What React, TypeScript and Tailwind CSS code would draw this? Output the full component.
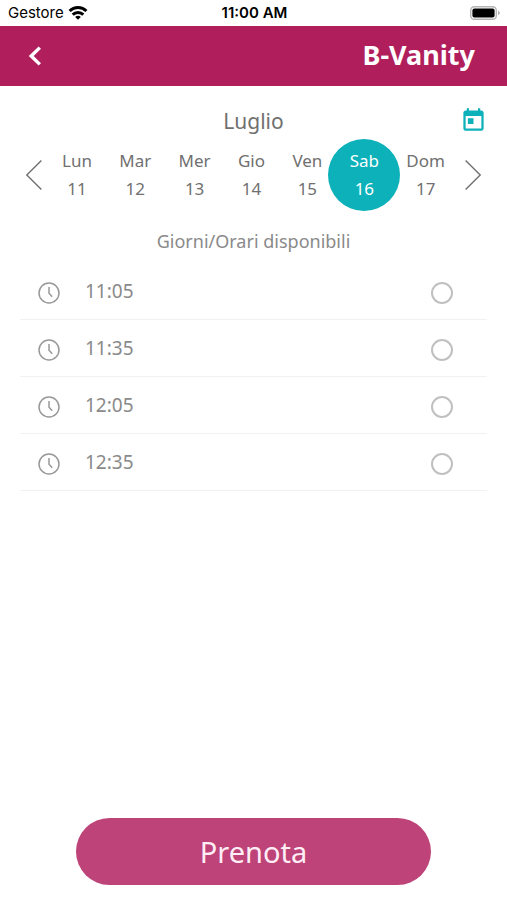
import { useState } from 'react';
import { MdToday } from 'react-icons/md';

const days = [
  { name: 'Lun', date: 11 },
  { name: 'Mar', date: 12 },
  { name: 'Mer', date: 13 },
  { name: 'Gio', date: 14 },
  { name: 'Ven', date: 15 },
  { name: 'Sab', date: 16 },
  { name: 'Dom', date: 17 },
];

const slots = ['11:05', '11:35', '12:05', '12:35'];

function WifiIcon() {
  return (
    <svg className="w-5 h-4" viewBox="0 0 20 16" fill="none" stroke="currentColor" strokeWidth="3" aria-hidden="true">
      <path d="M1.6 6a12 12 0 0 1 16.8 0" />
      <path d="M4.7 9.6a7.5 7.5 0 0 1 10.6 0" />
      <path d="M10 14.8l-2.8-2.9a3.9 3.9 0 0 1 5.6 0z" fill="currentColor" stroke="none" />
    </svg>
  );
}

function BatteryIcon() {
  return (
    <svg className="w-8 h-4" viewBox="0 0 32 16" aria-hidden="true">
      <rect x="1.7" y="1.7" width="25.6" height="12.6" rx="3.6" fill="#fff" stroke="#b4b4b4" strokeWidth="1.4" />
      <rect x="3.4" y="3.4" width="22.2" height="9.2" rx="2" fill="#000" />
      <path d="M29 5.8c1.2.4 1.8 1.2 1.8 2.2s-.6 1.8-1.8 2.2z" fill="#b4b4b4" />
    </svg>
  );
}

function ClockIcon() {
  return (
    <svg className="w-6 h-6" viewBox="0 0 24 24" fill="none" stroke="#999" strokeWidth="1.5" aria-hidden="true">
      <circle cx="12" cy="12" r="10" />
      <path d="M12 6v6.2l3.2 3.6" />
    </svg>
  );
}

export default function App() {
  const [day, setDay] = useState(16);
  const [slot, setSlot] = useState('');

  return (
    <div className="flex flex-col min-h-screen bg-white text-[#707070] font-['Noto_Sans',sans-serif]">
      {/* Status bar */}
      <div className="grid grid-cols-3 items-center h-[26px] pl-2 pr-1.5 text-black font-['Inter',sans-serif] text-[15px]">
        <div className="flex items-center gap-1">
          <span>Gestore</span>
          <WifiIcon />
        </div>
        <span className="text-center font-semibold">11:00 AM</span>
        <div className="flex justify-end">
          <BatteryIcon />
        </div>
      </div>

      {/* Header */}
      <header className="flex items-center justify-between h-[60px] pl-6 pr-8 bg-[#b01e5b] text-white">
        <button type="button" aria-label="Indietro">
          <svg className="w-6 h-6" viewBox="0 0 24 24" fill="none" stroke="currentColor" strokeWidth="3.4" aria-hidden="true">
            <path d="M15.8 3.6L7.2 12l8.6 8.4" />
          </svg>
        </button>
        <h1 className="pb-0.5 text-[27px] leading-8 font-bold">B-Vanity</h1>
      </header>

      <main className="flex flex-col flex-1 pt-[17px] pb-[15px]">
        {/* Month */}
        <div className="grid grid-cols-[1fr_auto_1fr] items-center h-9 px-5">
          <h2 className="col-start-2 text-[21px] leading-8">Luglio</h2>
          <button type="button" aria-label="Calendario" className="justify-self-end pb-0.5 text-[#0cb1b9]">
            <MdToday size={27} />
          </button>
        </div>

        {/* Week */}
        <div className="flex items-center justify-between h-[72px] px-6">
          <button type="button" aria-label="Settimana precedente">
            <svg className="w-5 h-8" viewBox="0 0 20 32" fill="none" stroke="currentColor" strokeWidth="1.4" aria-hidden="true">
              <path d="M17.4 1.6L2.8 16l14.6 14.4" />
            </svg>
          </button>
          <div className="flex flex-1 justify-between pl-[18px] pr-[18px]">
            {days.map(({ name, date }) => (
              <button
                key={date}
                type="button"
                onClick={() => setDay(date)}
                className={`relative isolate flex flex-col items-center text-[17px] leading-7 ${date === day ? 'text-white' : ''}`}
              >
                {date === day && (
                  <span className="absolute left-1/2 top-1/2 -z-10 size-[72px] -translate-x-1/2 -translate-y-1/2 rounded-full bg-[#0cb1b9]" />
                )}
                <span>{name}</span>
                <span>{date}</span>
              </button>
            ))}
          </div>
          <button type="button" aria-label="Settimana successiva">
            <svg className="w-5 h-8" viewBox="0 0 20 32" fill="none" stroke="currentColor" strokeWidth="1.4" aria-hidden="true">
              <path d="M2.6 1.6L17.2 16 2.6 30.4" />
            </svg>
          </button>
        </div>

        {/* Available times */}
        <h3 className="mt-4 text-center text-lg leading-7 text-[#8a8a8a]">Giorni/Orari disponibili</h3>
        <ul className="mt-2 px-5">
          {slots.map((time) => (
            <li key={time} className="border-b border-[#f1f1f1]">
              <label className="flex items-center h-14 pl-[17px] pr-[34px] pt-1">
                <ClockIcon />
                <span className="flex-1 pl-6 pb-1 text-[19px] leading-6 text-[#8a8a8a]">{time}</span>
                <input
                  type="radio"
                  name="orario"
                  value={time}
                  checked={slot === time}
                  onChange={() => setSlot(time)}
                  className="appearance-none size-[22px] rounded-full border-2 border-[#c0c0c0] checked:border-[7px] checked:border-[#0cb1b9]"
                />
              </label>
            </li>
          ))}
        </ul>

        <button
          type="button"
          className="mt-auto mx-auto w-[70%] h-[67px] rounded-full bg-[#bd4378] text-[#ffeef6] text-[29px] leading-9"
        >
          Prenota
        </button>
      </main>
    </div>
  );
}
